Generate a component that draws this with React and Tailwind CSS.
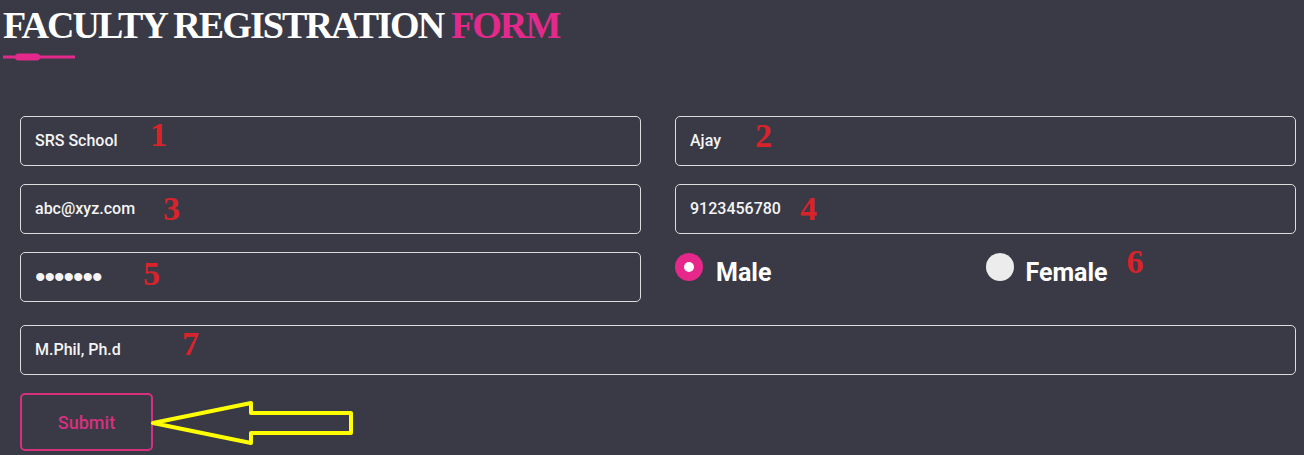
import React from "react";

const roboto = { fontFamily: "Roboto, 'Liberation Sans', sans-serif" };

function Num({ n, className }) {
  return (
    <span
      className={`absolute text-[34px] font-bold leading-none text-[#d9232b] pointer-events-none ${className}`}
      style={{ fontFamily: "'Liberation Serif', 'Times New Roman', serif" }}
    >
      {n}
    </span>
  );
}

function Field({ children, num, numClass, full }) {
  return (
    <div
      className={`relative h-[50px] rounded-[5px] border border-[#dcdcdc] flex items-center pl-[14px] text-[16px] font-medium text-[#f4f4f4] ${full ? "col-span-2" : ""}`}
      style={roboto}
    >
      {children}
      <Num n={num} className={numClass} />
    </div>
  );
}

export default function App() {
  return (
    <div className="relative w-full h-[455px] bg-[#393a46] overflow-hidden">
      <div className="pl-[3px] pt-[5px]">
        <h1
          className="text-[38px] font-bold leading-[40px] text-white tracking-[-0.05em] whitespace-nowrap"
          style={{ fontFamily: "'Liberation Serif', 'Times New Roman', serif" }}
        >
          FACULTY REGISTRATION <span className="text-[#e3298b]">FORM</span>
        </h1>
        <svg width="80" height="14" className="block mt-[5px]" viewBox="0 0 80 14">
          <line x1="0" y1="7" x2="72" y2="7" stroke="#e3298b" strokeWidth="3" />
          <rect x="12" y="3.5" width="25" height="7" rx="3.5" fill="#e3298b" />
        </svg>
      </div>

      <div className="pl-[20px] pr-[8px] pt-[52px]">
        <div className="grid grid-cols-2 gap-x-[34px] gap-y-[18px]">
          <Field num="1" numClass="left-[129px] top-[1px]">SRS School</Field>
          <Field num="2" numClass="left-[79px] top-[2px]">Ajay</Field>
          <Field num="3" numClass="left-[142px] top-[7px]">abc@xyz.com</Field>
          <Field num="4" numClass="left-[124px] top-[7px]">9123456780</Field>
          <Field num="5" numClass="left-[122px] top-[4px]">
            <span
              className="text-[30px] tracking-[-1px] leading-none"
              style={{ fontFamily: "'Liberation Sans', Arial, sans-serif" }}
            >
              •••••••
            </span>
          </Field>
          <div className="relative h-[50px] grid grid-cols-2" style={roboto}>
            <div className="flex items-start">
              <div className="mt-[1px] w-[28px] h-[28px] rounded-full bg-[#e6288a] flex items-center justify-center">
                <div className="w-[10px] h-[10px] rounded-full bg-white" />
              </div>
              <span className="ml-[13px] mt-[6px] text-[25px] font-bold leading-[30px] text-white">Male</span>
            </div>
            <div className="relative flex items-start">
              <div className="mt-[1px] w-[28px] h-[28px] rounded-full bg-[#ececec]" />
              <span className="ml-[12px] mt-[6px] text-[25px] font-bold leading-[30px] text-white">Female</span>
              <Num n="6" className="left-[141px] top-[-7px]" />
            </div>
          </div>
        </div>
        <div className="mt-[23px]">
          <Field full num="7" numClass="left-[161px] top-[1px]">M.Phil, Ph.d</Field>
        </div>
        <div className="relative mt-[18px]">
          <button
            className="w-[133px] h-[58px] rounded-[5px] border-2 border-[#d6317f] text-[#d6317f] text-[18px] font-medium bg-transparent"
            style={roboto}
          >
            Submit
          </button>
          <svg
            className="absolute left-[126px] top-[5px]"
            width="216"
            height="52"
            viewBox="146 398 216 52"
          >
            <polygon
              points="153,423 251,403 251,413 351,413 351,433 251,433 251,443"
              fill="none"
              stroke="#ffff00"
              strokeWidth="4"
              strokeLinejoin="round"
            />
          </svg>
        </div>
      </div>
    </div>
  );
}
